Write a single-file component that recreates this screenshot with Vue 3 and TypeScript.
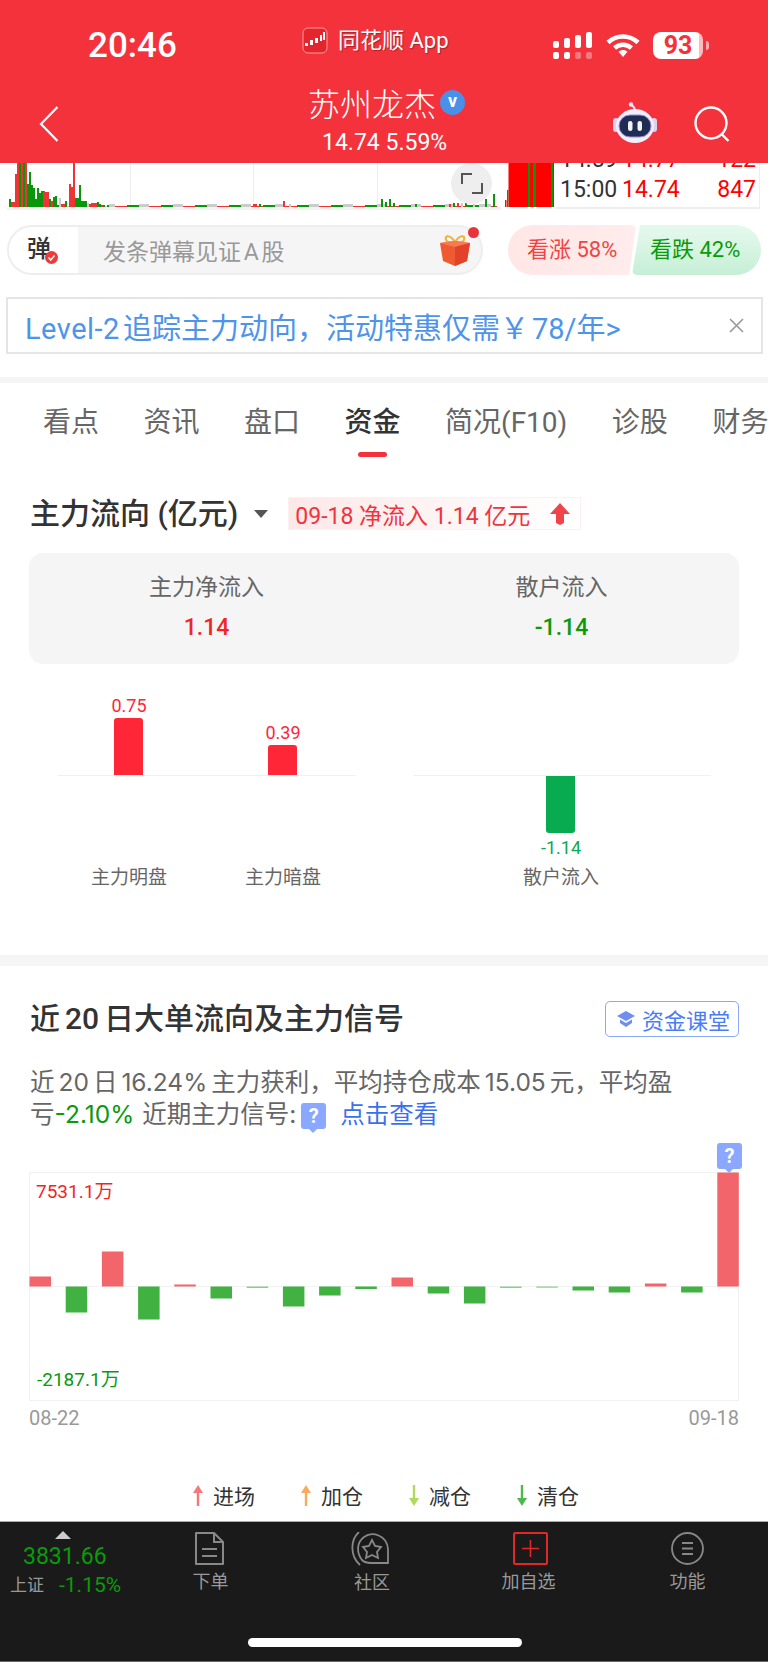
<template>
  <div class="page">
    <header class="top">
      <div class="status">
        <span class="clock">20:46</span>
        <div class="app-label">
          <svg class="app-icon" width="26" height="27" viewBox="0 0 26 27">
            <rect x="1" y="1" width="24" height="25" rx="5" fill="#e3262e" stroke="#f99" stroke-width="1" />
            <g fill="#fff"><rect x="3" y="16" width="3" height="3" /><rect x="8" y="13" width="3" height="5" /><rect x="13" y="11" width="3" height="5" /><rect x="18" y="8" width="2" height="6" /><rect x="21" y="5" width="2" height="8" /></g>
          </svg>
          <span>同花顺 App</span>
        </div>
        <div class="status-right">
          <div class="signal">
            <div v-for="(h, i) in signalBars" :key="i" class="signal-col">
              <i class="sig-top" :style="{ height: h + 'px' }"></i>
              <i class="sig-dot" :class="{ dim: i > 1 }"></i>
            </div>
          </div>
          <svg class="wifi" width="34" height="25" viewBox="0 0 34 25">
            <path d="M2 9.5C10.5 1.500 23.500 1.500 32 9.500" fill="none" stroke="#fff" stroke-width="4.500" />
            <path d="M8.500 15C13.500 10.500 20.500 10.500 25.500 15" fill="none" stroke="#fff" stroke-width="4.500" />
            <path d="M12.500 18.800C15.500 16.500 18.500 16.500 21.500 18.800L17 24Z" fill="#fff" />
          </svg>
          <div class="battery"><span>93</span></div>
          <i class="battery-cap"></i>
        </div>
      </div>
      <div class="nav">
        <svg class="back" width="20" height="36" viewBox="0 0 20 36">
          <path d="M18.500 1L2 18L18.500 35" fill="none" stroke="#fff" stroke-width="2.200" />
        </svg>
        <div class="stock">
          <div class="stock-name">
            <span>苏州龙杰</span>
            <i class="verified">v</i>
          </div>
          <div class="stock-price">14.74 5.59%</div>
        </div>
        <div class="nav-actions">
          <svg width="44" height="41" viewBox="0 0 44 41">
            <path d="M22 8C21 3 17 3 17 1" fill="none" stroke="#e7e2f5" stroke-width="2" />
            <circle cx="18" cy="2.500" r="2.200" fill="#e7e2f5" />
            <rect x="0" y="16" width="6" height="14" rx="3" fill="#d8d4ee" />
            <rect x="38" y="16" width="6" height="14" rx="3" fill="#d8d4ee" />
            <ellipse cx="22" cy="24" rx="19" ry="17" fill="#f1effa" />
            <rect x="6" y="13" width="32" height="22" rx="11" fill="#1f2d52" stroke="#9c8ce0" stroke-width="1" />
            <rect x="15" y="19" width="4.500" height="10" rx="2.200" fill="#f2f2f7" />
            <rect x="24.500" y="19" width="4.500" height="10" rx="2.200" fill="#f2f2f7" />
          </svg>
          <svg class="search" width="36" height="36" viewBox="0 0 36 36">
            <circle cx="17" cy="17" r="15.500" fill="none" stroke="#fff" stroke-width="2.400" />
            <path d="M27.500 28L34.500 35" stroke="#fff" stroke-width="2.400" />
          </svg>
        </div>
      </div>
    </header>

    <section class="strip">
      <div class="volume">
        <svg width="494" height="44" viewBox="0 0 494 44">
          <rect v-for="x in [123, 246, 370]" :key="x" :x="x" y="0" width="1" height="44" fill="#efefef" />
          <rect v-for="(b, i) in volumeBars" :key="i" :x="b.x" :y="44 - b.h" width="2" :height="b.h" :fill="b.c" />
        </svg>
        <div class="expand">
          <i class="corner tl"></i>
          <i class="corner br"></i>
        </div>
      </div>
      <svg class="closing" width="52" height="44" viewBox="0 0 52 44">
        <rect x="3" y="37" width="1.500" height="7" fill="#ff0000" />
        <rect x="5" y="27" width="1.500" height="17" fill="#0a960a" />
        <rect x="6.500" y="0" width="46" height="44" fill="#ff0000" />
        <rect x="26" y="0" width="2" height="44" fill="#0a960a" />
        <rect x="31" y="0" width="3" height="44" fill="#0a960a" />
        <rect x="49" y="0" width="2" height="44" fill="#0a960a" />
      </svg>
      <div class="ticks">
        <div class="tick-row cut"><span class="t-time">14:59</span><span class="t-price">14.77</span><span class="t-vol">122</span></div>
        <div class="tick-row"><span class="t-time">15:00</span><span class="t-price">14.74</span><span class="t-vol">847</span></div>
      </div>
    </section>

    <section class="danmu-row">
      <div class="danmu">
        <div class="danmu-tag">
          <span>弹</span>
          <svg class="danmu-check" width="13" height="13" viewBox="0 0 13 13">
            <circle cx="6.500" cy="6.500" r="6.500" fill="#ee3a3a" />
            <path d="M3.500 6.500L5.800 9L9.500 4.500" fill="none" stroke="#fff" stroke-width="1.500" />
          </svg>
        </div>
        <span class="danmu-hint">发条弹幕见证 A 股</span>
        <svg class="gift" width="30" height="31" viewBox="0 0 30 31">
          <path d="M15 7C9 -2 3 1 7 6.500C9 8 12 8 15 7C18 8 21 8 23 6.500C27 1 21 -2 15 7Z" fill="none" stroke="#f0b33c" stroke-width="2.200" />
          <path d="M0 8L15 6L30 8L27 26L15 31L3 26Z" fill="#ee5a32" />
          <path d="M0 8L15 12L30 8L15 6Z" fill="#f77b50" />
          <path d="M15 12L30 8L27 26L15 31Z" fill="#e2412a" />
        </svg>
        <i class="gift-dot"></i>
      </div>
      <div class="sentiment">
        <div class="bull">看涨 58%</div>
        <div class="bear">看跌 42%</div>
      </div>
    </section>

    <section class="promo">
      <span><span class="promo-latin">Level-2</span>追踪主力动向，活动特惠仅需<span class="promo-yen">￥</span>78/年&gt;</span>
      <svg width="15" height="15" viewBox="0 0 15 15">
        <path d="M1 1L14 14M14 1L1 14" stroke="#999" stroke-width="1.600" />
      </svg>
    </section>

    <div class="gap-bar thin"></div>

    <nav class="tabs">
      <div v-for="tab in tabs" :key="tab" class="tab" :class="{ active: tab === '资金' }">
        <span>{{ tab }}</span>
        <i></i>
      </div>
    </nav>

    <section class="flow-head">
      <h2>主力流向 (亿元)</h2>
      <i class="caret"></i>
      <div class="flow-badge">
        <span>09-18 净流入 1.14 亿元</span>
        <svg width="20" height="22" viewBox="0 0 20 22">
          <path d="M10 0L20 11H14V20L10 22L6 20V11H0Z" fill="#f0444a" />
        </svg>
      </div>
    </section>

    <section class="flow-card">
      <div class="flow-cell">
        <span class="cell-label">主力净流入</span>
        <span class="cell-value up-text">1.14</span>
      </div>
      <div class="flow-cell">
        <span class="cell-label">散户流入</span>
        <span class="cell-value down-text">-1.14</span>
      </div>
    </section>

    <section class="flow-bars">
      <div v-for="group in flowGroups" :key="group.id" class="bar-group" :class="group.id">
        <div v-for="item in group.items" :key="item.name" class="bar-col">
          <div class="bar-up">
            <template v-if="item.value > 0">
              <span class="bar-num red">{{ item.value.toFixed(2) }}</span>
              <i class="bar red" :style="{ height: item.h + 'px' }"></i>
            </template>
          </div>
          <div class="bar-down">
            <template v-if="item.value < 0">
              <i class="bar green" :style="{ height: item.h + 'px' }"></i>
              <span class="bar-num green">{{ item.value.toFixed(2) }}</span>
            </template>
          </div>
          <span class="bar-name">{{ item.name }}</span>
        </div>
      </div>
    </section>

    <div class="gap-bar wide"></div>

    <section class="signal-head">
      <h2>近<span class="num">20</span>日大单流向及主力信号</h2>
      <div class="class-btn">
        <svg width="18" height="18" viewBox="0 0 18 18">
          <path d="M9 1L18 6L9 11L0 6Z" fill="#6f8ff0" />
          <path d="M3 9.500L9 13L15 9.500V13L9 17L3 13Z" fill="#6f8ff0" />
        </svg>
        <span>资金课堂</span>
      </div>
    </section>

    <p class="signal-text">
      近<span class="num">20</span>日<span class="num">16.24%</span>主力获利，平均持仓成本<span class="num">15.05</span>元，平均盈亏<em>-2.10%</em> 近期主力信号:<i class="qmark inline">?</i><a>点击查看</a>
    </p>

    <section class="signal-chart">
      <svg width="710" height="229" viewBox="0 0 710 229">
        <rect x="0" y="114" width="710" height="1" fill="#f2f2f2" />
        <rect
          v-for="(v, i) in signalValues"
          :key="i"
          :x="i * 36.200 + 0.500"
          :y="v > 0 ? 114.500 - v : 114.500"
          width="21.500"
          :height="Math.abs(v)"
          :fill="v > 0 ? '#f2666b' : Math.abs(v) < 2 ? '#86cf86' : '#41b141'"
        />
      </svg>
      <span class="chart-max">7531.1万</span>
      <span class="chart-min">-2187.1万</span>
      <i class="qmark marker">?</i>
    </section>

    <div class="chart-dates">
      <span>08-22</span>
      <span>09-18</span>
    </div>

    <div class="legend">
      <div v-for="l in legend" :key="l.name" class="legend-item">
        <svg width="10" height="21" viewBox="0 0 10 21">
          <path v-if="l.up" d="M5 0L10 8H6.200V21H3.800V8H0Z" :fill="l.color" />
          <path v-else d="M5 21L10 13H6.200V0H3.800V13H0Z" :fill="l.color" />
        </svg>
        <span>{{ l.name }}</span>
      </div>
    </div>

    <footer class="bottom">
      <div class="bottom-row">
        <div class="index">
          <i class="index-tri"></i>
          <span class="index-num">3831.66</span>
          <div class="index-sub"><span>上证</span><b>-1.15%</b></div>
        </div>
        <div class="bottom-item order">
          <svg width="30" height="33" viewBox="0 0 30 33">
            <path d="M2 1H20L29 10V32H2Z" fill="none" stroke="#888" stroke-width="2" stroke-linejoin="round" />
            <path d="M20 1V10H29" fill="none" stroke="#888" stroke-width="2" />
            <path d="M8 17H23M8 24H23" stroke="#888" stroke-width="2" />
          </svg>
          <span>下单</span>
        </div>
        <div class="bottom-item community">
          <svg width="38" height="34" viewBox="0 0 38 34">
            <path d="M8 0C-1 8 -1 24 9 33" fill="none" stroke="#888" stroke-width="1.800" />
            <path d="M11 28C5 20 6 10 13 5C21 -1 36 3 37 17V31H20C16 31 13 30 11 28Z" fill="none" stroke="#888" stroke-width="1.800" />
            <path d="M21 8L24 14L30 15L26 20L27 26L21 23L15 26L16 20L12 15L18 14Z" fill="none" stroke="#888" stroke-width="1.800" />
          </svg>
          <span>社区</span>
        </div>
        <div class="bottom-item watch">
          <svg width="35" height="33" viewBox="0 0 35 33">
            <rect x="1" y="1" width="33" height="31" fill="none" stroke="#e02828" stroke-width="2" rx="1" />
            <path d="M9 16.500H26M17.500 8V25" stroke="#e02828" stroke-width="1.600" />
          </svg>
          <span>加自选</span>
        </div>
        <div class="bottom-item">
          <svg width="33" height="33" viewBox="0 0 33 33">
            <circle cx="16.500" cy="16.500" r="15.500" fill="none" stroke="#888" stroke-width="1.800" />
            <path d="M11 11H22M11 16.500H22M11 22H22" stroke="#888" stroke-width="2.200" />
          </svg>
          <span>功能</span>
        </div>
      </div>
      <div class="home-line"></div>
    </footer>
  </div>
</template>

<script setup lang="ts">
interface VolumeBar {
  x: number
  h: number
  c: string
}

const RED = '#ee3434'
const GREEN = '#0a960a'
const GRAY = '#cccccc'

const signalBars = [7, 10, 13, 16]
const tabs = ['看点', '资讯', '盘口', '资金', '简况(F10)', '诊股', '财务']

// 开盘段手工取值 [r|g|h, 高度]
const openBars: [string, number][] = [
  ['g', 8], ['r', 5], ['r', 5], ['r', 33], ['r', 44], ['g', 44], ['r', 44], ['g', 44], ['r', 44], ['g', 23],
  ['g', 35], ['g', 22], ['g', 19], ['g', 8], ['g', 19], ['g', 14], ['g', 16], ['r', 16], ['r', 15], ['r', 15],
  ['g', 8], ['r', 6], ['g', 10], ['g', 11], ['g', 2], ['h', 9], ['r', 3], ['r', 3], ['g', 6], ['h', 1],
  ['r', 23], ['r', 20], ['r', 44], ['g', 9], ['g', 9], ['g', 22], ['g', 6], ['g', 6], ['g', 6], ['h', 4],
  ['r', 3], ['r', 4], ['r', 4], ['r', 4], ['g', 5], ['g', 3], ['r', 2], ['g', 2], ['h', 1], ['g', 2]
]

const spikes: Record<number, [string, number]> = {
  122: ['r', 3], 123: ['r', 3], 125: ['g', 3], 137: ['r', 6], 140: ['h', 3],
  186: ['g', 8], 188: ['g', 5], 190: ['g', 8], 192: ['g', 4], 203: ['g', 3],
  220: ['r', 3], 222: ['g', 4], 224: ['r', 4], 226: ['h', 4], 228: ['g', 4], 232: ['h', 3],
  238: ['g', 8], 240: ['h', 3], 242: ['g', 13]
}

const pick = (k: string) => (k === 'r' ? RED : k === 'g' ? GREEN : GRAY)

const volumeBars: VolumeBar[] = Array.from({ length: 244 }, (_, i) => {
  const seed = (i * 37 + 11) % 17
  const fallback: [string, number] = [seed % 3 === 0 ? 'r' : seed % 3 === 1 ? 'g' : 'h', 1 + (seed % 3)]
  const [k, h] = i < openBars.length ? openBars[i] : spikes[i] ?? fallback
  return { x: i * 2 + 2, h, c: pick(k) }
})

const flowGroups = [
  {
    id: 'main',
    items: [
      { name: '主力明盘', value: 0.75, h: 57 },
      { name: '主力暗盘', value: 0.39, h: 30 }
    ]
  },
  {
    id: 'retail',
    items: [{ name: '散户流入', value: -1.14, h: 57 }]
  }
]

const signalValues = [10, -26, 35, -33, 2, -12, -1.5, -20, -9, -2.5, 9, -7, -17, -1.5, -1.2, -4, -6, 3, -6, 114]

const legend = [
  { name: '进场', color: '#f4777b', up: true },
  { name: '加仓', color: '#f9ab5c', up: true },
  { name: '减仓', color: '#b3d95c', up: false },
  { name: '清仓', color: '#4db84d', up: false }
]
</script>

<style scoped>
.page {
  position: relative;
  width: 768px;
  height: 1662px;
  overflow: hidden;
  background: #fff;
  font-family: Roboto, "Noto Sans CJK SC", sans-serif;
  color: #333;
}

i {
  font-style: normal;
  display: block;
}

h2 {
  margin: 0;
  font-size: 30px;
  font-weight: 500;
  line-height: 36px;
  color: #333;
  white-space: nowrap;
}

/* 顶部 */
.top {
  position: relative;
  z-index: 2;
  height: 163px;
  background: #f3323c;
  color: #fff;
}

.status {
  display: flex;
  align-items: flex-start;
  height: 82px;
  padding-left: 88px;
}

.clock {
  width: 214px;
  margin-top: 26px;
  font-size: 35px;
  line-height: 40px;
  font-weight: 500;
}

.app-label {
  display: flex;
  align-items: center;
  gap: 10px;
  width: 251px;
  margin-top: 27px;
  font-size: 22px;
  line-height: 27px;
  text-shadow: 1px 1px 1px rgba(0, 0, 0, 0.3);
}

.status-right {
  display: flex;
  align-items: flex-start;
  margin-top: 32px;
}

.signal {
  display: flex;
  gap: 5px;
  width: 53px;
}

.signal-col {
  display: flex;
  flex-direction: column;
  justify-content: flex-end;
  gap: 4px;
  height: 27px;
}

.sig-top,
.sig-dot {
  width: 6px;
  border-radius: 2px;
  background: #fff;
}

.sig-dot {
  height: 7px;
}

.sig-dot.dim {
  background: rgba(255, 255, 255, 0.35);
}

.wifi {
  margin-top: 1px;
}

.battery {
  width: 50px;
  height: 27px;
  margin-left: 13px;
  border-radius: 8px;
  background: linear-gradient(90deg, #fff 92%, #fbb 92%);
  color: #f3323c;
  font-size: 25px;
  font-weight: 700;
  line-height: 27px;
  text-align: center;
}

.battery-cap {
  width: 3px;
  height: 9px;
  margin: 9px 0 0 3px;
  border-radius: 0 3px 3px 0;
  background: rgba(255, 255, 255, 0.6);
}

.nav {
  display: flex;
  align-items: flex-start;
  padding-left: 39px;
}

.back {
  margin-top: 24px;
}

.stock {
  width: 553px;
  margin-top: 9px;
  padding-left: 249px;
  box-sizing: content-box;
}

.stock-name {
  display: flex;
  align-items: center;
  gap: 4px;
  font-size: 32px;
  line-height: 28px;
  height: 28px;
  font-weight: 300;
  white-space: nowrap;
}

.verified {
  width: 25px;
  height: 25px;
  margin-top: -5px;
  border-radius: 50%;
  background: #4a90e8;
  color: #fff;
  font-size: 18px;
  font-weight: 700;
  line-height: 22px;
  text-align: center;
}

.stock-price {
  margin-top: 10px;
  padding-left: 14px;
  font-size: 23px;
  line-height: 28px;
  white-space: nowrap;
}

.nav-actions {
  display: flex;
  align-items: flex-start;
  gap: 37px;
  margin-top: 20px;
  margin-left: -248px;
}

.search {
  margin-top: 4px;
}

/* 分时条 */
.strip {
  display: flex;
  align-items: flex-start;
  height: 47px;
  padding-left: 7px;
}

.volume {
  position: relative;
  width: 494px;
  height: 47px;
  border-bottom: 3px solid #f2f2f2;
  box-sizing: border-box;
}

.volume svg,
.closing {
  display: block;
}

.expand {
  position: absolute;
  left: 444px;
  top: 0;
  width: 41px;
  height: 41px;
  border-radius: 50%;
  background: #eee;
}

.corner {
  position: absolute;
  width: 9px;
  height: 9px;
  border: 0 solid #555;
}

.corner.tl {
  left: 10px;
  top: 10px;
  border-width: 2px 0 0 2px;
}

.corner.br {
  right: 9px;
  bottom: 10px;
  border-width: 0 2px 2px 0;
}

.closing {
  margin-left: 1px;
}

.ticks {
  width: 204px;
  height: 46px;
  margin-left: 2px;
  box-sizing: border-box;
  overflow: hidden;
  border-right: 1px solid #eee;
  border-bottom: 2px solid #eee;
  display: flex;
  flex-direction: column;
  justify-content: flex-end;
  padding: 0 3px 2px 4px;
}

.tick-row {
  display: flex;
  flex: none;
  font-size: 23px;
  line-height: 30px;
  color: #f00;
}

.tick-row.cut {
  margin-top: -30px;
}

.t-time {
  color: #333;
  width: 62px;
}

.t-vol {
  margin-left: auto;
}

/* 弹幕 */
.danmu-row {
  display: flex;
  gap: 25px;
  height: 50px;
  margin-top: 15px;
  padding-left: 7px;
}

.danmu {
  position: relative;
  display: flex;
  align-items: center;
  width: 476px;
  box-sizing: border-box;
  border: 2px solid #eee;
  border-radius: 25px;
  background: #f5f5f5;
}

.danmu-tag {
  position: relative;
  width: 69px;
  height: 46px;
  border-radius: 23px 0 0 23px;
  background: #fff;
  font-size: 24px;
  font-weight: 500;
  line-height: 44px;
  box-sizing: border-box;
  text-align: left;
  padding-left: 18px;
}

.danmu-check {
  position: absolute;
  left: 36px;
  top: 24px;
}

.danmu-hint {
  margin-left: 25px;
  font-size: 23px;
  word-spacing: -3px;
  color: #999;
}

.gift {
  position: absolute;
  left: 431px;
  top: 8px;
}

.gift-dot {
  position: absolute;
  right: 2px;
  top: 0;
  width: 11px;
  height: 11px;
  border-radius: 50%;
  background: #e8333c;
}

.sentiment {
  display: flex;
  width: 253px;
  font-size: 22px;
  line-height: 50px;
}

.bull,
.bear {
  box-sizing: border-box;
  height: 50px;
  white-space: nowrap;
}

.bull {
  width: 128px;
  padding-left: 19px;
  border-radius: 25px 5px 5px 25px;
  background: linear-gradient(90deg, #ffe7e6, #ffecec);
  color: #f04444;
  clip-path: polygon(0 0, 100% 0, calc(100% - 7px) 100%, 0 100%);
}

.bear {
  width: 129px;
  margin-left: -4px;
  padding-left: 18px;
  border-radius: 5px 25px 25px 5px;
  background: linear-gradient(180deg, #e6f9ee, #c6efd6);
  color: #0a9a0a;
  clip-path: polygon(8px 0, 100% 0, 100% 100%, 0 100%);
}

/* 活动条 */
.promo {
  display: flex;
  align-items: center;
  justify-content: space-between;
  box-sizing: border-box;
  width: 757px;
  height: 57px;
  margin: 22px 0 0 6px;
  padding: 0 17px 0 17px;
  border: 2px solid #e5e5e5;
  color: #4d94ea;
  font-size: 29px;
  white-space: nowrap;
}

.promo-latin {
  margin-right: 3px;
  letter-spacing: 0.500px;
}

.promo-yen {
  margin-right: 3px;
}

.gap-bar {
  background: #f5f5f5;
}

.gap-bar.thin {
  height: 6px;
  margin-top: 23px;
}

.gap-bar.wide {
  height: 11px;
}

/* Tab */
.tabs {
  display: flex;
  gap: 44.5px;
  height: 74px;
  padding: 20px 0 0 43px;
  box-sizing: border-box;
  overflow: hidden;
  font-size: 28px;
  color: #666;
  white-space: nowrap;
}

.tab {
  display: flex;
  flex-direction: column;
  align-items: center;
  flex: none;
}

.tab span {
  line-height: 40px;
}

.tab i {
  width: 29px;
  height: 5px;
  margin-top: 9px;
  border-radius: 3px;
}

.tab.active {
  color: #333;
  font-weight: 500;
}

.tab.active i {
  background: #f5323c;
}

/* 主力流向 */
.flow-head {
  display: flex;
  align-items: center;
  height: 33px;
  margin-top: 40px;
  padding-left: 30px;
}

.caret {
  width: 0;
  height: 0;
  margin: 0 20px 0 16px;
  border-left: 7px solid transparent;
  border-right: 7px solid transparent;
  border-top: 8px solid #555;
}

.flow-badge {
  display: flex;
  align-items: center;
  justify-content: space-between;
  box-sizing: border-box;
  width: 293px;
  height: 33px;
  padding: 0 10px 0 6px;
  border: 1px solid #fdf0f0;
  background: linear-gradient(90deg, #fde8e8, #fff);
  color: #f0333c;
  font-size: 23px;
  white-space: nowrap;
}

.flow-card {
  display: flex;
  width: 710px;
  height: 111px;
  margin: 23px 0 0 29px;
  border-radius: 14px;
  background: #f5f5f5;
}

.flow-cell {
  display: flex;
  flex: 1;
  flex-direction: column;
  align-items: center;
  padding-top: 19px;
}

.cell-label {
  font-size: 23px;
  line-height: 32px;
  color: #666;
}

.cell-value {
  margin-top: 8px;
  font-size: 23px;
  line-height: 32px;
  font-weight: 500;
}

.up-text {
  color: #f02525;
}

.down-text {
  color: #0a9a0a;
}

.flow-bars {
  display: flex;
  gap: 57px;
  padding-left: 58px;
}

.bar-group {
  position: relative;
  display: flex;
  box-sizing: border-box;
  width: 298px;
  height: 291px;
}

.bar-group::after {
  content: "";
  position: absolute;
  left: 0;
  right: 0;
  top: 111px;
  height: 1px;
  background: #f0f0f0;
}

.bar-group.main {
  gap: 94px;
  padding-left: 41px;
}

.bar-group.retail {
  padding-left: 118px;
}

.bar-col {
  display: flex;
  flex: none;
  flex-direction: column;
  align-items: center;
  width: 60px;
}

.bar-up {
  display: flex;
  flex-direction: column;
  align-items: center;
  justify-content: flex-end;
  height: 111px;
}

.bar-down {
  display: flex;
  flex-direction: column;
  align-items: center;
  height: 91px;
  padding-top: 1px;
  box-sizing: border-box;
}

.bar {
  position: relative;
  z-index: 1;
  width: 29px;
  border-radius: 3px 3px 0 0;
}

.bar-down .bar {
  border-radius: 0 0 3px 3px;
}

.bar.red {
  background: #ff2638;
}

.bar.green {
  background: #08ab4f;
}

.bar-num {
  font-size: 18px;
  line-height: 22px;
  margin-bottom: 1px;
}

.bar-num.red {
  color: #ff2638;
}

.bar-num.green {
  color: #08ab4f;
  margin: 4px 0 0;
}

.bar-name {
  font-size: 19px;
  line-height: 24px;
  color: #666;
  white-space: nowrap;
}

/* 大单信号 */
.signal-head {
  display: flex;
  align-items: center;
  justify-content: space-between;
  width: 709px;
  height: 36px;
  margin-top: 35px;
  padding-left: 30px;
}

.signal-head .num {
  margin: 0 5px;
}

.class-btn {
  display: flex;
  align-items: center;
  gap: 7px;
  box-sizing: border-box;
  width: 134px;
  height: 36px;
  padding-left: 11px;
  border: 1.500px solid #8aa8f8;
  border-radius: 5px;
  color: #4a7cf5;
  font-size: 22px;
  white-space: nowrap;
}

.signal-text {
  width: 664px;
  margin: 29px 0 0 30px;
  font-family: Inter, "Noto Sans CJK SC", sans-serif;
  font-size: 24.500px;
  line-height: 32px;
  color: #666;
}

.signal-text .num {
  margin: 0 4px;
}

.signal-text em {
  margin-right: 1px;
  font-style: normal;
  color: #0a9a0a;
}

.signal-text a {
  margin-left: 14px;
  color: #3a70f0;
}

.qmark {
  position: relative;
  width: 25px;
  height: 26px;
  border-radius: 3px;
  background: #8aa8ff;
  color: #fff;
  font-family: Roboto, sans-serif;
  font-size: 20px;
  font-weight: 700;
  line-height: 26px;
  text-align: center;
}

.qmark::after {
  content: "";
  position: absolute;
  left: 8px;
  bottom: -4px;
  border-left: 4px solid transparent;
  border-right: 4px solid transparent;
  border-top: 4px solid #8aa8ff;
}

.qmark.inline {
  display: inline-block;
  margin-left: 5px;
  vertical-align: 0;
  margin-bottom: -4px;
}

.signal-chart {
  position: relative;
  box-sizing: border-box;
  width: 710px;
  height: 229px;
  margin: 42px 0 0 29px;
}

.signal-chart svg {
  display: block;
  box-shadow: inset 0 0 0 1px #f2f2f2;
}

.chart-max,
.chart-min {
  position: absolute;
  font-size: 19px;
  line-height: 24px;
}

.chart-max {
  left: 7px;
  top: 8px;
  color: #f02525;
}

.chart-min {
  left: 8px;
  bottom: 9px;
  color: #0a9a0a;
}

.marker {
  position: absolute;
  right: -3px;
  top: -29px;
}

.chart-dates {
  display: flex;
  justify-content: space-between;
  width: 710px;
  margin: 5px 0 0 29px;
  font-size: 20px;
  line-height: 24px;
  color: #999;
}

.legend {
  display: flex;
  height: 24px;
  margin-top: 53px;
  padding-left: 193px;
}

.legend-item {
  display: flex;
  align-items: center;
  gap: 10px;
  width: 108px;
  font-size: 21px;
  color: #333;
}

/* 底栏 */
.bottom {
  height: 141px;
  margin-top: 14px;
  box-sizing: border-box;
  border-top: 1px solid #aaa;
  border-bottom: 1px solid #666;
  background: #1a1a1a;
}

.bottom-row {
  display: flex;
  height: 116px;
}

.index {
  position: relative;
  box-sizing: border-box;
  width: 131px;
  padding: 9px 0 0 10px;
}

.index-tri {
  width: 0;
  height: 0;
  margin-left: 45px;
  border-left: 8px solid transparent;
  border-right: 8px solid transparent;
  border-bottom: 8px solid #ccc;
}

.index-num {
  display: block;
  margin: 4px 0 0 13px;
  font-size: 23px;
  line-height: 28px;
  color: #0a9a0a;
}

.index-sub {
  display: flex;
  align-items: center;
  gap: 15px;
  font-size: 17px;
  line-height: 28px;
  color: #999;
}

.index-sub b {
  font-size: 21px;
  font-weight: 400;
  color: #0a9a0a;
}

.bottom-item {
  display: flex;
  flex-direction: column;
  align-items: center;
  width: 159px;
  padding-top: 10px;
  box-sizing: border-box;
  font-size: 18px;
  line-height: 24px;
  color: #999;
}

.bottom-item span {
  margin-top: 5px;
}

.bottom-item.order svg {
  margin-left: -4px;
}

.bottom-item.community span {
  margin-left: 5px;
}

.bottom-item.watch svg {
  margin-left: 3px;
}

.home-line {
  width: 274px;
  height: 9px;
  margin-left: 248px;
  border-radius: 5px;
  background: #fff;
}
</style>
